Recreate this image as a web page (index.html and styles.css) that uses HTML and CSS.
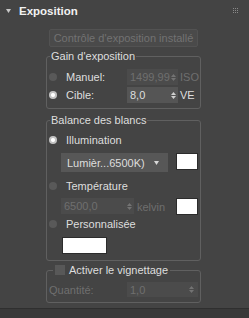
FILE: index.html
```html
<!DOCTYPE html>
<html lang="fr">
<head>
  <meta charset="UTF-8" />
  <title>Exposition</title>
  <link rel="stylesheet" href="styles.css">
</head>
<body>

<div class="rollout">
  <div class="rollout-head">
    <svg class="caret" width="5" height="4" viewBox="0 0 5 4"><polygon points="0,0 5,0 2.5,4" fill="#c8c8c8"/></svg>
    <span class="rollout-title">Exposition</span>
    <svg class="grip" width="5" height="5" viewBox="0 0 5 5">
      <rect x="0" y="0" width="1" height="1"/><rect x="2" y="0" width="1" height="1"/><rect x="4" y="0" width="1" height="1"/>
      <rect x="0" y="2" width="1" height="1"/><rect x="2" y="2" width="1" height="1"/><rect x="4" y="2" width="1" height="1"/>
      <rect x="0" y="4" width="1" height="1"/><rect x="2" y="4" width="1" height="1"/><rect x="4" y="4" width="1" height="1"/>
    </svg>
  </div>

  <div class="rollout-body">
    <button class="btn-installed" disabled>Contrôle d'exposition installé</button>

    <fieldset class="group group-gain">
      <legend>Gain d'exposition</legend>
      <div class="row">
        <span class="radio"></span>
        <span class="label">Manuel:</span>
        <span class="spinner spinner-gain off">
          <span class="spin-val">1499,99</span>
          <svg class="spin-arrows" width="5" height="9" viewBox="0 0 5 9"><polygon points="0,4 2.5,1 5,4"/><polygon points="0,5 5,5 2.5,8"/></svg>
        </span>
        <span class="unit off">ISO</span>
      </div>
      <div class="row">
        <span class="radio on"></span>
        <span class="label">Cible:</span>
        <span class="spinner spinner-gain">
          <span class="spin-val">8,0</span>
          <svg class="spin-arrows" width="5" height="9" viewBox="0 0 5 9"><polygon points="0,4 2.5,1 5,4"/><polygon points="0,5 5,5 2.5,8"/></svg>
        </span>
        <span class="unit">VE</span>
      </div>
    </fieldset>

    <fieldset class="group group-balance">
      <legend>Balance des blancs</legend>
      <div class="row">
        <span class="radio on"></span>
        <span class="label">Illumination</span>
      </div>
      <div class="row row-sub row-illum">
        <span class="dropdown">
          <span class="dropdown-val">Lumièr...6500K)</span>
          <svg class="dropdown-arrow" width="5" height="4" viewBox="0 0 5 4"><polygon points="0,0 5,0 2.5,4"/></svg>
        </span>
        <span class="swatch"></span>
      </div>
      <div class="row">
        <span class="radio"></span>
        <span class="label">Température</span>
      </div>
      <div class="row row-sub row-kelvin">
        <span class="spinner spinner-kelvin off">
          <span class="spin-val">6500,0</span>
          <svg class="spin-arrows" width="5" height="9" viewBox="0 0 5 9"><polygon points="0,4 2.5,1 5,4"/><polygon points="0,5 5,5 2.5,8"/></svg>
        </span>
        <span class="unit unit-kelvin off">kelvin</span>
        <span class="swatch"></span>
      </div>
      <div class="row">
        <span class="radio"></span>
        <span class="label">Personnalisée</span>
      </div>
      <div class="row row-sub">
        <span class="swatch swatch-wide"></span>
      </div>
    </fieldset>

    <fieldset class="group group-vignette">
      <legend><span class="checkbox"></span>Activer le vignettage</legend>
      <div class="row row-qty">
        <span class="label label-qty off">Quantité:</span>
        <span class="spinner spinner-qty off">
          <span class="spin-val">1,0</span>
          <svg class="spin-arrows" width="5" height="9" viewBox="0 0 5 9"><polygon points="0,4 2.5,1 5,4"/><polygon points="0,5 5,5 2.5,8"/></svg>
        </span>
      </div>
    </fieldset>
  </div>
</div>

</body>
</html>
```

FILE: styles.css
```css
* {
  margin: 0;
  padding: 0;
  box-sizing: border-box;
}
body {
  font-family: 'Liberation Sans', Arial, sans-serif;
  font-size: 11px;
  background: #393939;
  color: #dedede;
  width: 249px;
  height: 318px;
  overflow: hidden;
}

.rollout {
  background: #444;
  border-bottom: 1px solid #2f2f2f;
  padding-bottom: 5px;
}

.rollout-head {
  height: 22px;
  display: flex;
  align-items: center;
  padding-left: 6px;
}
.rollout-title {
  font-weight: bold;
  font-size: 11.5px;
  color: #f2f2f2;
  margin-left: 8px;
}
.grip {
  margin-left: auto;
  margin-right: 11px;
  margin-bottom: 2px;
  fill: #8a8a8a;
}

.rollout-body {
  padding-top: 7px;
}

.btn-installed {
  display: block;
  margin-left: 49px;
  width: 149px;
  height: 18px;
  background: #4a4a4a;
  border: 1px solid #525252;
  border-radius: 2px;
  color: #727272;
  font: inherit;
}

.group {
  margin: 2px 0 0 46px;
  width: 155px;
  border: 1px solid #606060;
  border-radius: 3px;
  padding: 0 0 3px 2px;
}
.group legend {
  margin-left: 1px;
  padding: 0 1px;
  line-height: 14px;
}
.group-gain {
  padding-top: 5px;
  padding-bottom: 4px;
}
.group-balance {
  margin-top: 4px;
  padding-top: 4px;
  padding-bottom: 6px;
}
.group-vignette {
  margin-top: 2px;
  padding-top: 5px;
  padding-bottom: 5px;
}
.group-vignette legend {
  display: flex;
  align-items: center;
  margin-left: 4px;
  padding: 0 2px;
}

.row {
  display: flex;
  align-items: center;
  height: 18px;
}
.row-sub {
  height: auto;
  align-items: flex-start;
  margin: 4px 0 0 12px;
}
.row-illum {
  margin-bottom: 5px;
}
.row-kelvin {
  margin-top: 3px;
}

.radio {
  width: 8px;
  height: 8px;
  border-radius: 50%;
  background: #595959;
  flex: none;
}
.radio.on {
  background: radial-gradient(circle, #fff 0 1.5px, #c2c2c2 2.5px);
}
.checkbox {
  width: 10px;
  height: 10px;
  background: #585858;
  margin-right: 4px;
}

.label {
  margin-left: 9px;
  width: 61px;
  white-space: nowrap;
}
.off {
  color: #6f6f6f;
}

.spinner {
  display: flex;
  align-items: center;
  height: 16px;
  background: #555;
  padding: 0 2px 0 3px;
  fill: #d0d0d0;
}
.spinner.off {
  background: #4b4b4b;
  fill: #737373;
}
.spin-val {
  flex: 1;
  overflow: hidden;
  white-space: nowrap;
}
.spin-arrows {
  flex: none;
  margin-left: 1px;
}
.spinner-gain {
  width: 51px;
}
.unit {
  margin-left: 2px;
}

.dropdown {
  display: flex;
  align-items: center;
  width: 107px;
  height: 19px;
  background: #575757;
  padding: 0 9px 0 6px;
  fill: #d8d8d8;
}
.dropdown-val {
  flex: 1;
}
.swatch {
  width: 22px;
  height: 17px;
  background: #fff;
  border: 1px solid #2c2c2c;
  margin-left: 8px;
}
.swatch-wide {
  width: 45px;
  margin-left: 1px;
}

.spinner-kelvin {
  width: 73px;
}
.unit-kelvin {
  align-self: center;
  margin-left: 3px;
  width: 31px;
}

.row-qty {
  height: 15px;
}
.label-qty {
  margin-left: 0;
  width: 78px;
}
.spinner-qty {
  width: 71px;
  height: 15px;
  padding-right: 4px;
}
```
